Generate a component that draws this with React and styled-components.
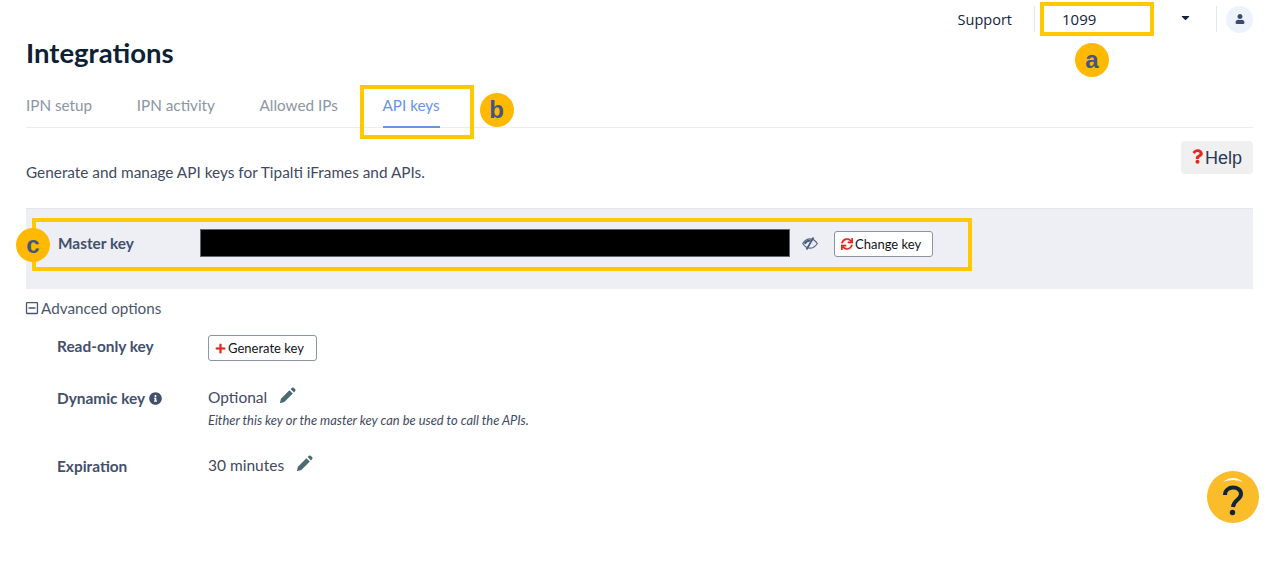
import React from 'react'
import styled, { createGlobalStyle } from 'styled-components'
import { FaCaretDown, FaInfoCircle, FaPlus, FaQuestion, FaRegMinusSquare, FaSync, FaUser } from 'react-icons/fa'

const GlobalStyle = createGlobalStyle`
  html, body {
    margin: 0;
    background: #fff;
    font-family: Lato, "Liberation Sans", sans-serif;
    color: #3a4863;
  }
`

const tabs = ['IPN setup', 'IPN activity', 'Allowed IPs', 'API keys']

const Pencil = () => (
  <svg width="17" height="17" viewBox="0 0 16 16" fill="currentColor">
    <path d="M0.8 15.2 L1.8 11 L9.8 3 L13 6.2 L5 14.2Z" />
    <path d="M10.9 1.9 L12.2 0.7 Q13 0.1 13.8 0.7 L15.3 2.2 Q15.9 3 15.3 3.8 L14.1 5.1Z" />
  </svg>
)

const App = () => (
  <Page>
    <GlobalStyle />
    <TopBar>
      <Support>Support</Support>
      <BarDivider />
      <CompanySelect>
        <Highlight top={2} left={5} width={114} height={34} />
        <CompanyName>1099</CompanyName>
        <Caret><FaCaretDown /></Caret>
        <Marker top={43} left={40}>a</Marker>
      </CompanySelect>
      <BarDivider />
      <Avatar><FaUser /></Avatar>
    </TopBar>

    <Title>Integrations</Title>

    <TabBar>
      {tabs.map(tab => (
        <Tab key={tab} active={tab === 'API keys'}>
          {tab}
          {tab === 'API keys' && (
            <>
              <Highlight top={-10} left={-23} width={114} height={54} />
              <Marker top={-2} left={97}>b</Marker>
            </>
          )}
        </Tab>
      ))}
    </TabBar>

    <IntroRow>
      <Intro>Generate and manage API keys for Tipalti iFrames and APIs.</Intro>
      <HelpButton><FaQuestion />Help</HelpButton>
    </IntroRow>

    <MasterPanel>
      <Highlight top={9} left={6} width={940} height={53} />
      <Marker top={19} left={-10}>c</Marker>
      <MasterLabel>Master key</MasterLabel>
      <KeyMask />
      <EyeIcon>
        <svg width="16" height="13" viewBox="0 0 16 13" fill="none">
          <path d="M0.7 6.5 C3 3 5.5 1.8 8 1.8 C10.5 1.8 13 3 15.3 6.5 C13 10 10.5 11.2 8 11.2 C5.5 11.2 3 10 0.7 6.5Z" stroke="#5a6a88" strokeWidth="1.3" />
          <path d="M2.6 6.8 C3.8 4.6 6 3.4 8.6 3.5" stroke="#4a5a78" strokeWidth="2.2" />
          <path d="M4.5 12.5 L11.5 0.5" stroke="#4a5a78" strokeWidth="1.7" />
        </svg>
      </EyeIcon>
      <ChangeKeyButton width={99}><RedIcon size={12}><FaSync /></RedIcon>Change key</ChangeKeyButton>
    </MasterPanel>

    <AdvancedToggle><FaRegMinusSquare />Advanced options</AdvancedToggle>

    <OptionsGrid>
      <OptionLabel offset={1}>Read-only key</OptionLabel>
      <OptionValue>
        <OutlineButton width={109}><RedIcon size={11}><FaPlus /></RedIcon>Generate key</OutlineButton>
      </OptionValue>

      <OptionLabel offset={6}>Dynamic key <InfoIcon><FaInfoCircle /></InfoIcon></OptionLabel>
      <OptionValue>
        <ValueLine>Optional<EditIcon><Pencil /></EditIcon></ValueLine>
        <Hint>Either this key or the master key can be used to call the APIs.</Hint>
      </OptionValue>

      <OptionLabel offset={6}>Expiration</OptionLabel>
      <OptionValue>
        <ValueLine>30 minutes<EditIcon><Pencil /></EditIcon></ValueLine>
      </OptionValue>
    </OptionsGrid>

    <FloatingHelp>
      <svg width="52" height="52" viewBox="0 0 52 52">
        <circle cx="26" cy="26" r="26" fill="#fbbc2c" />
        <path d="M16 11 Q26 3 36 11 Q26 7 16 11Z" fill="#fff" />
        <path d="M18 24 C18 14 34 14.5 34 23 C34 29 26.5 28.5 26 36" fill="none" stroke="#10243a" strokeWidth="4" />
        <circle cx="25.5" cy="41.5" r="2.7" fill="#10243a" />
      </svg>
    </FloatingHelp>
  </Page>
)

const Page = styled.div`
  position: relative;
  box-sizing: border-box;
  width: 1279px;
  height: 582px;
  padding: 0 26px;
  overflow: hidden;
`

const TopBar = styled.div`
  display: flex;
  align-items: center;
  justify-content: flex-end;
  height: 38px;
`

const Support = styled.span`
  margin-right: 22px;
  font-family: "Open Sans", sans-serif;
  font-size: 14.5px;
  color: #14233c;
`

const BarDivider = styled.div`
  width: 1px;
  height: 26px;
  background: #e4e6ea;
`

const CompanySelect = styled.div`
  position: relative;
  display: flex;
  align-items: center;
  justify-content: space-between;
  box-sizing: border-box;
  width: 181px;
  height: 100%;
  padding: 0 24px 0 27px;
`

const CompanyName = styled.span`
  font-family: "Open Sans", sans-serif;
  font-size: 15px;
  color: #14233c;
`

const Caret = styled.span`
  display: flex;
  margin-top: -3px;
  font-size: 13px;
  color: #14233c;
`

const Avatar = styled.div`
  display: flex;
  align-items: center;
  justify-content: center;
  width: 27px;
  height: 27px;
  margin-left: 9px;
  border-radius: 50%;
  background: #eef2fb;
  font-size: 10px;
  color: #3a4a72;
`

const Title = styled.h1`
  margin: 0;
  font-size: 27.5px;
  line-height: 30px;
  font-weight: 700;
  color: #0c2036;
`

const TabBar = styled.div`
  display: flex;
  gap: 44.7px;
  height: 60px;
  box-sizing: border-box;
  padding-top: 27px;
  border-bottom: 1px solid #ebedf0;
`

const Tab = styled.div`
  position: relative;
  height: 33px;
  font-size: 15.25px;
  line-height: 20px;
  color: ${({ active }) => (active ? '#6694e8' : '#8b95a3')};
  border-bottom: 2px solid ${({ active }) => (active ? '#6694e8' : 'transparent')};
  box-sizing: border-box;
`

const IntroRow = styled.div`
  display: flex;
  align-items: flex-start;
  justify-content: space-between;
  height: 80px;
  padding-top: 13px;
  box-sizing: border-box;
`

const Intro = styled.p`
  margin: 21px 0 0;
  font-size: 15.35px;
  line-height: 20px;
  color: #3f4a5f;
`

const HelpButton = styled.div`
  display: flex;
  align-items: center;
  justify-content: center;
  width: 72px;
  height: 33px;
  box-sizing: border-box;
  padding-top: 1px;
  border-radius: 4px;
  background: #f0f0f0;
  font-family: "Liberation Sans", sans-serif;
  font-size: 18px;
  color: #2b3a55;

  svg {
    width: 11px;
    height: 15px;
    margin: -3px 2px 0 0;
    color: #e8261c;
  }
`

const MasterPanel = styled.div`
  position: relative;
  display: flex;
  align-items: center;
  height: 81px;
  box-sizing: border-box;
  padding: 0 0 13px 32px;
  background: #edeff4;
  border-top: 1px solid #e4e6ea;
`

const MasterLabel = styled.span`
  width: 142px;
  font-size: 15.4px;
  font-weight: 700;
  color: #434f6c;
`

const KeyMask = styled.div`
  width: 590px;
  height: 28px;
  box-sizing: border-box;
  border: 1px solid #5f6670;
  background: #000;
`

const EyeIcon = styled.span`
  display: flex;
  margin: 1px 16px 0 12px;
`

const OutlineButton = styled.button`
  display: flex;
  align-items: center;
  box-sizing: border-box;
  width: ${({ width }) => width}px;
  height: 26px;
  padding: 0 6px;
  border: 1px solid #8a94a3;
  border-radius: 3px;
  background: #fff;
  font-family: Lato, sans-serif;
  font-size: 13px;
  color: #10141c;
`

const ChangeKeyButton = styled(OutlineButton)`
  margin-top: 2px;
`

const RedIcon = styled.span`
  display: flex;
  margin-right: 2px;
  font-size: ${({ size }) => size}px;
  color: #e3281f;

  svg {
    stroke: currentColor;
    stroke-width: 8;
  }
`

const AdvancedToggle = styled.div`
  display: flex;
  align-items: center;
  gap: 2px;
  height: 38px;
  font-size: 15.25px;
  color: #4a566e;

  svg {
    margin-left: -1px;
    font-size: 14px;
    color: #4a5670;
  }
`

const OptionsGrid = styled.div`
  display: grid;
  grid-template-columns: 151px 1fr;
  grid-template-rows: 47px 68px 40px;
  padding: 8px 0 0 31px;
`

const OptionLabel = styled.div`
  padding-top: ${({ offset }) => offset}px;
  font-size: 15.4px;
  line-height: 20px;
  font-weight: 700;
  color: #434f6c;
`

const InfoIcon = styled.span`
  font-size: 13px;
  vertical-align: -1px;
  color: #434f6c;
`

const OptionValue = styled.div`
  font-size: 15.5px;
  line-height: 20px;
  color: #3f4a5f;
`

const ValueLine = styled.div`
  display: flex;
  align-items: center;
  padding-top: 5px;
`

const EditIcon = styled.span`
  display: flex;
  margin: -4px 0 0 12px;
  color: #4c6a72;
`

const Hint = styled.div`
  margin-top: 5px;
  font-size: 12.9px;
  line-height: 16px;
  font-style: italic;
  color: #3f4a5f;
`

const FloatingHelp = styled.div`
  position: absolute;
  top: 471px;
  left: 1207px;
  display: flex;
`

// annotations painted over the screenshot
const Highlight = styled.div`
  position: absolute;
  top: ${({ top }) => top}px;
  left: ${({ left }) => left}px;
  width: ${({ width }) => width}px;
  height: ${({ height }) => height}px;
  box-sizing: border-box;
  border: 4px solid #ffc800;
  pointer-events: none;
`

const Marker = styled.div`
  position: absolute;
  top: ${({ top }) => top}px;
  left: ${({ left }) => left}px;
  width: 34px;
  height: 34px;
  border-radius: 50%;
  background: #ffb900;
  font-family: "Liberation Sans", sans-serif;
  font-size: 24px;
  line-height: 34px;
  font-weight: 700;
  text-align: center;
  color: #44557f;
`

export default App
